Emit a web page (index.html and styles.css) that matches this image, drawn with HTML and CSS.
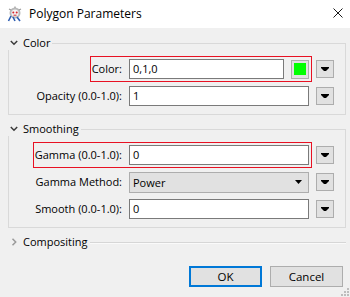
FILE: index.html
```html
<!DOCTYPE html>
<html>
<head>
<meta charset="utf-8">
<link rel="stylesheet" href="styles.css">
</head>
<body>
<div class="window">
  <header class="titlebar">
    <svg class="app-icon" width="16" height="16" viewBox="0 0 16 16">
      <circle cx="8" cy="7" r="5.5" fill="#b9b9b9"/>
      <circle cx="8" cy="7" r="3.6" fill="#f4f4f4"/>
      <circle cx="6.3" cy="6.4" r="1" fill="#d8262b"/>
      <circle cx="9.7" cy="6.4" r="1" fill="#d8262b"/>
      <path d="M2 3l2 1M14 3l-2 1M8 0.5v1.5" stroke="#9a9a9a" stroke-width="1.2"/>
      <path d="M4 10l-2.5 5M6 11l2 4M10 11l3 4" stroke="#2f5fb3" stroke-width="1.6"/>
      <path d="M6.5 9.2h3" stroke="#d8262b" stroke-width="1"/>
    </svg>
    <span class="title">Polygon Parameters</span>
    <svg class="close" width="10" height="10" viewBox="0 0 10 10">
      <path d="M0.5 0.5l9 9M9.5 0.5l-9 9" stroke="#1a1a1a" stroke-width="1"/>
    </svg>
  </header>

  <main class="content">
    <section class="group">
      <div class="group-head">
        <svg class="chev" width="8" height="6" viewBox="0 0 8 6"><path d="M0.8 1l3.2 3.2L7.2 1" fill="none" stroke="#3a3a3a" stroke-width="1.5"/></svg>
        <span class="group-title">Color</span>
        <span class="rule"></span>
      </div>
      <div class="group-body">
        <div class="row">
          <div class="wrap hl">
            <span class="label">Color:</span>
            <div class="field">
              <div class="input short">0,1,0</div>
              <div class="swatch"><span class="swatch-fill"></span></div>
            </div>
          </div>
          <div class="drop"><svg width="8" height="4" viewBox="0 0 8 4"><path d="M0 0h8v1l-3 3h-2l-3-3z" fill="#000"/></svg></div>
        </div>
        <div class="row">
          <div class="wrap">
            <span class="label">Opacity (0.0-1.0):</span>
            <div class="field"><div class="input">1</div></div>
          </div>
          <div class="drop"><svg width="8" height="4" viewBox="0 0 8 4"><path d="M0 0h8v1l-3 3h-2l-3-3z" fill="#000"/></svg></div>
        </div>
      </div>
    </section>

    <section class="group">
      <div class="group-head">
        <svg class="chev" width="8" height="6" viewBox="0 0 8 6"><path d="M0.8 1l3.2 3.2L7.2 1" fill="none" stroke="#3a3a3a" stroke-width="1.5"/></svg>
        <span class="group-title">Smoothing</span>
        <span class="rule"></span>
      </div>
      <div class="group-body">
        <div class="row">
          <div class="wrap hl">
            <span class="label">Gamma (0.0-1.0):</span>
            <div class="field"><div class="input">0</div></div>
          </div>
          <div class="drop"><svg width="8" height="4" viewBox="0 0 8 4"><path d="M0 0h8v1l-3 3h-2l-3-3z" fill="#000"/></svg></div>
        </div>
        <div class="row">
          <div class="wrap">
            <span class="label">Gamma Method:</span>
            <div class="field">
              <div class="combo"><span>Power</span><svg width="7" height="4" viewBox="0 0 7 4"><path d="M0 0h7l-3.5 4z" fill="#000"/></svg></div>
            </div>
          </div>
          <div class="drop"><svg width="8" height="4" viewBox="0 0 8 4"><path d="M0 0h8v1l-3 3h-2l-3-3z" fill="#000"/></svg></div>
        </div>
        <div class="row">
          <div class="wrap">
            <span class="label">Smooth (0.0-1.0):</span>
            <div class="field"><div class="input">0</div></div>
          </div>
          <div class="drop"><svg width="8" height="4" viewBox="0 0 8 4"><path d="M0 0h8v1l-3 3h-2l-3-3z" fill="#000"/></svg></div>
        </div>
      </div>
    </section>

    <section class="group collapsed">
      <div class="group-head">
        <svg class="chev" width="8" height="8" viewBox="0 0 8 8"><path d="M2.5 0.8l3.2 3.2-3.2 3.2" fill="none" stroke="#9a9a9a" stroke-width="1.5"/></svg>
        <span class="group-title">Compositing</span>
        <span class="rule flat"></span>
      </div>
    </section>

    <footer class="actions">
      <button class="btn default">OK</button>
      <button class="btn">Cancel</button>
    </footer>
  </main>

  <svg class="grip" width="8" height="8" viewBox="0 0 8 8">
    <rect x="6" y="0" width="2" height="2" fill="#bdbdbd"/>
    <rect x="3" y="3" width="2" height="2" fill="#bdbdbd"/>
    <rect x="6" y="3" width="2" height="2" fill="#bdbdbd"/>
    <rect x="0" y="6" width="2" height="2" fill="#bdbdbd"/>
    <rect x="3" y="6" width="2" height="2" fill="#bdbdbd"/>
    <rect x="6" y="6" width="2" height="2" fill="#bdbdbd"/>
  </svg>
</div>
</body>
</html>
```
FILE: styles.css
```css
* { box-sizing: border-box; }
html, body { margin: 0; padding: 0; }
body {
  width: 350px;
  height: 297px;
  overflow: hidden;
  background: #f0f0f0;
  font-family: "Open Sans", "Noto Sans", sans-serif;
  font-size: 11px;
  color: #000;
}
.window {
  position: relative;
  width: 350px;
  height: 297px;
  display: flex;
  flex-direction: column;
}
.titlebar {
  height: 28px;
  background: #fff;
  display: flex;
  align-items: center;
  padding: 0 7px 0 7px;
  flex: none;
}
.app-icon { flex: none; margin-right: 6px; margin-top: -1px; }
.title {
  font-size: 12px;
  flex: 1;
  color: #000;
  margin-top: -1px;
}
.close { flex: none; margin-right: 0; margin-top: -3px; }

.content {
  flex: 1;
  display: flex;
  flex-direction: column;
  padding: 8px 4px 0 8px;
}
.group + .group { margin-top: 7px; }
.group-head {
  height: 14px;
  display: flex;
  align-items: center;
  padding-left: 2px;
}
.chev { flex: none; margin-right: 5px; }
.group-title { line-height: 14px; white-space: nowrap; }
.rule {
  flex: 1;
  align-self: stretch;
  margin-top: 7px;
  margin-left: 2px;
  border-top: 1px solid #d9d9d9;
  border-right: 1px solid #d9d9d9;
}
.rule.flat {
  border-right: none;
  height: 2px;
  flex: 1;
  align-self: flex-start;
  border-top: 1px solid #d6d6d6;
  border-bottom: 1px solid #fafafa;
}
.group-body {
  border: 1px solid #d9d9d9;
  border-top: none;
  padding: 6px 11px 5px 0;
  display: flex;
  flex-direction: column;
  gap: 1px;
}
.row {
  display: flex;
  justify-content: flex-end;
  align-items: center;
  gap: 4px;
}
.wrap {
  display: flex;
  align-items: center;
  gap: 7px;
  border: 1px solid transparent;
  padding: 2px 2px 2px 1px;
}
.wrap.hl { border-color: #e81123; }
.label { white-space: nowrap; line-height: 14px; }
.field {
  width: 180px;
  height: 20px;
  display: flex;
  align-items: center;
  gap: 7px;
}
.input {
  flex: 1;
  height: 20px;
  background: #fff;
  border: 1px solid #7a7a7a;
  padding: 0 3px;
  line-height: 18px;
  font-size: 11px;
}
.swatch {
  flex: none;
  width: 18px;
  height: 19px;
  background: #e1e1e1;
  border: 1px solid #adadad;
  display: flex;
  align-items: center;
  justify-content: center;
}
.swatch-fill { width: 12px; height: 12px; background: #00ff00; }
.combo {
  flex: 1;
  height: 21px;
  background: #e1e1e1;
  border: 1px solid #adadad;
  display: flex;
  align-items: center;
  justify-content: space-between;
  padding: 0 6px 0 3px;
  font-size: 11px;
}
.drop {
  flex: none;
  width: 18px;
  height: 18px;
  background: #e1e1e1;
  border: 1px solid #adadad;
  display: flex;
  align-items: center;
  justify-content: center;
}
.drop svg { display: block; }

.actions {
  margin-top: 17px;
  display: flex;
  justify-content: flex-end;
  gap: 8px;
  padding-right: 3px;
}
.btn {
  width: 73px;
  height: 21px;
  background: #e1e1e1;
  border: 1px solid #adadad;
  font-family: "Open Sans", "Noto Sans", sans-serif;
  font-size: 11.5px;
  color: #000;
  padding: 0;
  margin: 0;
}
.btn.default { border: 2px solid #0078d7; }
.grip { position: absolute; right: 1px; bottom: 1px; }
```
